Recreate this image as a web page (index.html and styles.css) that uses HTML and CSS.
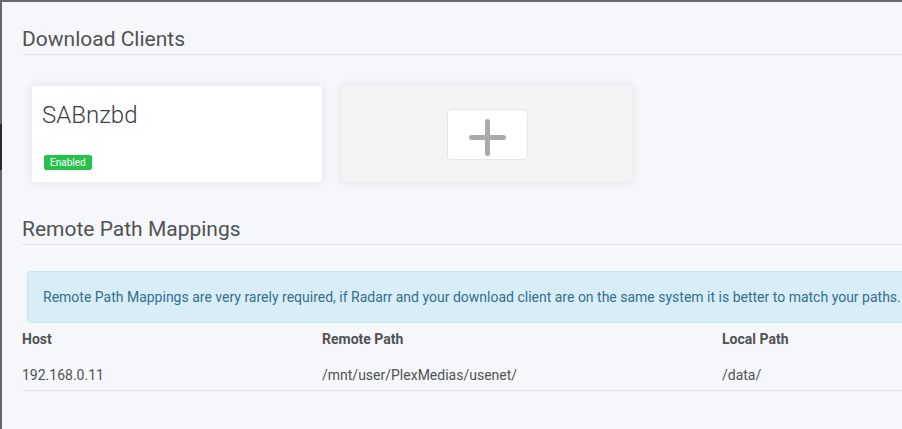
FILE: index.html
```html
<!DOCTYPE html>
<html lang="en">
<head>
    <meta charset="UTF-8">
    <title>Download Clients - Radarr</title>
    <link rel="stylesheet" href="styles.css">
</head>
<body>
    <div class="page">
        <div class="page-edge"></div>

        <main class="page-content">
            <section class="fieldset">
                <h2 class="legend">Download Clients</h2>
                <div class="cards">
                    <div class="card">
                        <div class="card-name">SABnzbd</div>
                        <div class="card-labels">
                            <span class="label label-success">Enabled</span>
                        </div>
                    </div>
                    <div class="card card-add">
                        <button type="button" class="add-button">
                            <svg width="37" height="37" viewBox="0 0 37 37">
                                <path d="M18.5 2.5v32M2.5 18.5h32" stroke="#aaaaaa" stroke-width="5" stroke-linecap="round" fill="none"/>
                            </svg>
                        </button>
                    </div>
                </div>
            </section>

            <section class="fieldset">
                <h2 class="legend">Remote Path Mappings</h2>
                <div class="alert alert-info">
                    Remote Path Mappings are very rarely required, if Radarr and your download client are on the same system it is better to match your paths.
                </div>
                <div class="mappings-header">
                    <div class="col-host">Host</div>
                    <div class="col-path">Remote Path</div>
                    <div class="col-local">Local Path</div>
                </div>
                <div class="mapping-row">
                    <div class="col-host">192.168.0.11</div>
                    <div class="col-path">/mnt/user/PlexMedias/usenet/</div>
                    <div class="col-local">/data/</div>
                </div>
            </section>
        </main>
    </div>
</body>
</html>
```

FILE: styles.css
```css
* { box-sizing: border-box; margin: 0; padding: 0; }
html, body { height: 100%; overflow: hidden; }
body {
    font-family: Roboto, "Liberation Sans", Arial, sans-serif;
    font-size: 14px;
    color: #515253;
    background-color: #f5f7fa;
    border-top: 2px solid #6b6b6b;
}
.page {
    display: flex;
    min-height: 100%;
}
.page-edge {
    flex: 0 0 2px;
    background: linear-gradient(#666 0 122px, #2b2b2b 122px 168px, #666 168px);
}
.page-content {
    flex: 0 0 1000px;
    padding: 22px 20px 20px;
}

/* sections */
.fieldset {
    display: flex;
    flex-direction: column;
}
.legend {
    font-size: 21px;
    font-weight: 400;
    line-height: 30px;
    border-bottom: 1px solid #e5e5e5;
    margin-bottom: 21px;
}
.cards {
    display: flex;
    flex-wrap: wrap;
    margin-bottom: 22px;
}
.card {
    width: 290px;
    height: 96px;
    margin: 10px;
    padding: 10px;
    border-radius: 3px;
    background-color: #fff;
    box-shadow: 0 0 10px 1px rgba(0, 0, 0, 0.08);
}
.card-name {
    font-size: 24px;
    font-weight: 300;
    line-height: 39px;
    margin-bottom: 20px;
    color: #3d4043;
}
.card-labels { display: flex; }
.label {
    margin: 0 2px;
    padding: 0 5px;
    border: 1px solid;
    border-radius: 2px;
    font-size: 10px;
    line-height: 13px;
}
.label-success {
    background-color: #27c24c;
    border-color: #27c24c;
    color: #fff;
}
.card-add {
    display: flex;
    align-items: center;
    justify-content: center;
    background-color: #f4f4f4;
}
.add-button {
    padding: 9px 21px 3px;
    border: 1px solid #e5e5e5;
    border-radius: 4px;
    background-color: #fff;
    cursor: pointer;
}
.add-button svg { display: block; }

/* remote path mappings */
.alert {
    margin: 5px;
    padding: 15px;
    border: 1px solid;
    border-radius: 4px;
    line-height: 20px;
}
.alert-info {
    background-color: #d9edf7;
    border-color: #bce8f1;
    color: #31708f;
}
.mappings-header {
    display: flex;
    font-weight: 700;
    line-height: 22px;
    margin-bottom: 10px;
}
.mapping-row {
    display: flex;
    height: 31px;
    line-height: 30px;
    border-bottom: 1px solid #e5e5e5;
}
.col-host { flex: 0 0 300px; }
.col-path { flex: 0 0 400px; }
.col-local { flex: 1 1 auto; }
```
